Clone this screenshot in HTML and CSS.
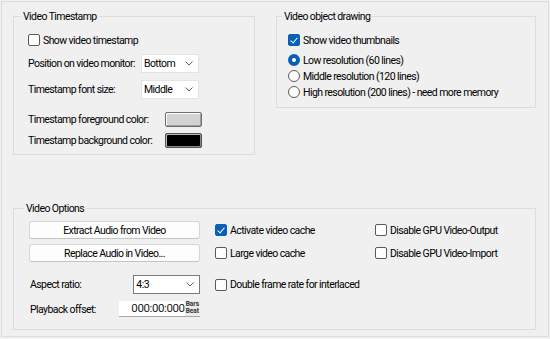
FILE: index.html
```html
<!DOCTYPE html>
<html>
  <head>
    <title>Video settings</title>
    <link rel="stylesheet" href="styles.css">
  </head>
  <body>
    <div class="frame">
      <div class="top">
        <fieldset class="group timestamp">
          <legend>Video Timestamp</legend>
          <label class="check"><span class="box"></span>Show video timestamp</label>
          <div class="row sel-row">
            <span class="lbl">Position on video monitor:</span>
            <span class="select">Bottom<svg viewBox="0 0 8 5"><path d="M0.5 0.5 4 4 7.5 0.5"/></svg></span>
          </div>
          <div class="row sel-row">
            <span class="lbl">Timestamp font size:</span>
            <span class="select">Middle<svg viewBox="0 0 8 5"><path d="M0.5 0.5 4 4 7.5 0.5"/></svg></span>
          </div>
          <div class="row color-row first">
            <span class="lbl">Timestamp foreground color:</span>
            <span class="swatch light"></span>
          </div>
          <div class="row color-row">
            <span class="lbl">Timestamp background color:</span>
            <span class="swatch dark"></span>
          </div>
        </fieldset>

        <fieldset class="group drawing">
          <legend>Video object drawing</legend>
          <label class="check"><span class="box on"></span>Show video thumbnails</label>
          <div class="radios">
            <label class="radio"><span class="dot on"></span>Low resolution (60 lines)</label>
            <label class="radio"><span class="dot"></span>Middle resolution (120 lines)</label>
            <label class="radio"><span class="dot"></span>High resolution (200 lines) - need more memory</label>
          </div>
        </fieldset>
      </div>

      <fieldset class="group options">
        <legend>Video Options</legend>
        <div class="opt-grid">
          <button class="btn" type="button">Extract Audio from Video</button>
          <label class="check"><span class="box on"></span>Activate video cache</label>
          <label class="check"><span class="box"></span>Disable GPU Video-Output</label>

          <button class="btn" type="button">Replace Audio in Video...</button>
          <label class="check"><span class="box"></span>Large video cache</label>
          <label class="check"><span class="box"></span>Disable GPU Video-Import</label>

          <div class="row aspect">
            <span class="lbl">Aspect ratio:</span>
            <span class="select strong">4:3<svg viewBox="0 0 8 5"><path d="M0.5 0.5 4 4 7.5 0.5"/></svg></span>
          </div>
          <label class="check end"><span class="box"></span>Double frame rate for interlaced</label>
          <span></span>

          <div class="row offset">
            <span class="lbl">Playback offset:</span>
            <span class="timefield"><span class="time">000:00:000</span><span class="unit">Bars<br>Beat</span></span>
          </div>
        </div>
      </fieldset>
    </div>
  </body>
</html>
```

FILE: styles.css
```css
body { margin: 0; background: #f0f0f0; font-family: Roboto, "Liberation Sans", Arial, sans-serif; font-size: 10.5px; letter-spacing: -0.58px; color: #000; }

.frame { margin: 1px; height: 336px; box-sizing: border-box; border: 1px solid #dcdcdc; padding: 8px 0 0 11px; }

.top { display: flex; gap: 21px; }

.group { margin: 0; border: 1px solid #dcdcdc; border-radius: 0; box-sizing: border-box; min-width: 0; }
.group legend { padding: 0 2px; line-height: 13px; }

.timestamp { width: 242px; height: 145px; padding: 10px 0 0 14px; }
.timestamp legend { margin-left: -7px; }
.drawing { width: 260px; height: 98px; padding: 10px 0 0 11px; }
.drawing legend { margin-left: -6px; }
.options { width: 523px; height: 128px; margin-top: 47px; padding: 6px 0 0 15px; }
.options legend { margin-left: -5px; }

/* checkboxes and radios */
.check, .radio { display: flex; align-items: center; height: 14px; white-space: nowrap; }
.box { width: 10px; height: 10px; border: 1px solid #5a5a5a; border-radius: 2px; background: #fff; margin-right: 3px; flex: none; position: relative; }
.box.on { background: #0a5fb8; border-color: #0a5fb8; }
.box.on::after { content: ""; position: absolute; left: 3px; top: 1px; width: 3px; height: 6px; border: solid #fff; border-width: 0 1px 1px 0; transform: rotate(40deg); }

.radios { margin-top: 6px; display: flex; flex-direction: column; gap: 2px; }
.dot { width: 10px; height: 10px; border: 1px solid #5a5a5a; border-radius: 50%; background: #fff; margin-right: 3px; flex: none; box-sizing: content-box; }
.dot.on { background: #fff; border: 4px solid #0a5fb8; width: 4px; height: 4px; }

/* rows with a label and a control */
.row { display: flex; align-items: center; white-space: nowrap; }
.sel-row { margin-top: 7px; }
.sel-row .lbl { width: 113px; }
.color-row { margin-top: 6px; }
.color-row.first { margin-top: 13px; }
.color-row .lbl { width: 137px; }

.select { display: flex; align-items: center; justify-content: space-between; width: 58px; height: 19px; box-sizing: border-box; padding: 0 5px 0 2px; background: #fff; border: 1px solid #e3e3e3; }
.select svg { width: 8px; height: 5px; fill: none; stroke: #606060; stroke-width: 1; }
.select.strong { border-color: #7a7a7a; width: 67px; }

.swatch { width: 37px; height: 15px; box-sizing: border-box; border: 1px solid #6d6d6d; border-radius: 2px; box-shadow: inset 1px 1px 0 #fff, inset -1px -1px 0 #a0a0a0; }
.swatch.light { background: #d2d2d2; }
.swatch.dark { background: #000; border-color: #555; box-shadow: inset 1px 1px 0 #bbb, inset -1px -1px 0 #888, inset 2px 2px 0 #000; }

/* video options grid */
.opt-grid { display: grid; grid-template-columns: 171px 145px auto; grid-template-rows: 18px 18px 27px 18px; column-gap: 15px; row-gap: 5px; align-items: center; }
.btn { height: 18px; margin: 0; padding: 0; font: inherit; letter-spacing: inherit; color: #000; background: #fdfdfd; border: 1px solid #d6d6d6; border-bottom-color: #c4c4c4; border-radius: 3px; }
.check.end { align-self: end; height: 19px; }

.aspect { align-self: end; }
.aspect .lbl { width: 104px; padding-left: 1px; }
.offset { align-self: end; }
.offset .lbl { width: 89px; padding-left: 1px; }

.timefield { display: flex; align-items: stretch; height: 16px; width: 81px; box-sizing: border-box; background: #fff; border-bottom: 1px solid #a8a8a8; }
.time { flex: 1; text-align: right; font-size: 11.5px; letter-spacing: -0.4px; line-height: 15px; color: #1a1a1a; }
.unit { font-size: 6.5px; line-height: 7px; letter-spacing: 0; background: #ebebeb; padding: 0 1px; font-weight: bold; color: #333; }
```
